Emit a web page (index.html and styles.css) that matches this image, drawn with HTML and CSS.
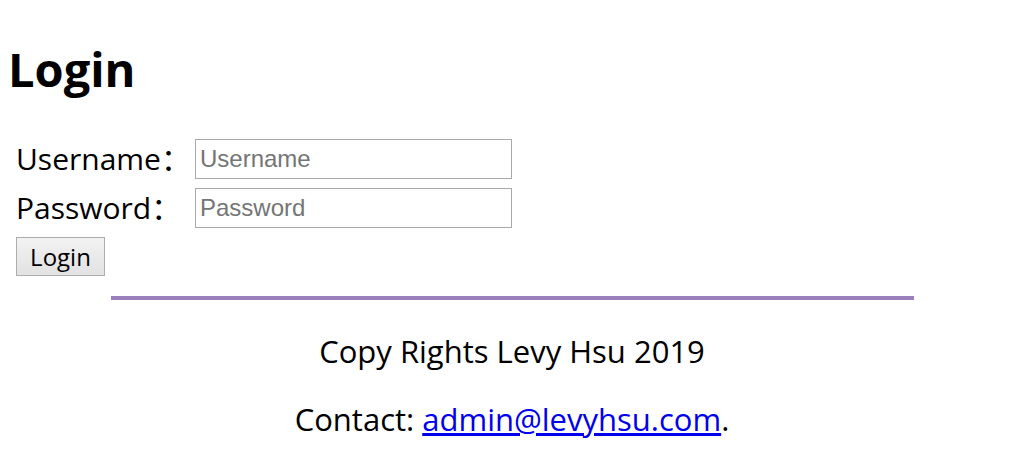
FILE: index.html
```html
<!DOCTYPE html>
<html lang="en">
  <head>
    <meta charset="UTF-8" />
    <meta name="viewport" content="width=device-width, initial-scale=1.0" />
    <link rel="stylesheet" href="styles.css">
    <title>Login</title>
  </head>
  <body>
    <h1>Login</h1>

    <form class="login" onsubmit="return false;">
      <div class="row">
        <label for="username">Username：</label>
        <input type="text" id="username" placeholder="Username" />
      </div>
      <div class="row">
        <label for="password">Password：</label>
        <input type="password" id="password" placeholder="Password" />
      </div>
      <div>
        <button type="submit" class="btn">Login</button>
      </div>
    </form>

    <hr class="divider" />

    <footer class="foot">
      <p>Copy Rights Levy Hsu 2019</p>
      <p>Contact: <a href="mailto:admin@levyhsu.com">admin@levyhsu.com</a>.</p>
    </footer>
  </body>
</html>
```

FILE: styles.css
```css
body {
  margin: 8px;
  color: #000;
  background: #fff;
  font-family: "Open Sans", "Noto Sans CJK SC", sans-serif;
  font-size: 30px;
}
h1 {
  font-size: 47px;
  font-weight: bold;
  margin: 33px 0 0;
  line-height: 1.2;
}
.login {
  display: flex;
  flex-direction: column;
  gap: 9px;
  padding-left: 8px;
  margin-top: 42px;
}
.login .row {
  display: grid;
  grid-template-columns: 179px 317px;
  align-items: center;
}
.login label {
  line-height: 40px;
}
.login input {
  box-sizing: border-box;
  height: 40px;
  width: 317px;
  margin: 0;
  padding: 0 4px;
  border: 1px solid #a9a9a9;
  font-family: "Liberation Sans", Arial, sans-serif;
  font-size: 24px;
}
.login input::placeholder {
  color: #757575;
}
.btn {
  display: block;
  box-sizing: border-box;
  width: 89px;
  height: 39px;
  margin: 0;
  padding: 0;
  border: 1px solid #adadad;
  border-radius: 0;
  background: linear-gradient(#f2f2f2, #e2e2e2);
  font-family: "Open Sans", sans-serif;
  font-size: 24px;
  color: #000;
}
.divider {
  width: 803px;
  height: 4px;
  margin: 20px auto 0;
  border: 0;
  background: #9b7fbd;
}
.foot {
  text-align: center;
  font-size: 31px;
}
.foot p {
  margin: 33px 0 0;
  line-height: 1.2;
}
.foot p + p {
  margin-top: 30px;
}
.foot a {
  color: #0000ee;
}
```
